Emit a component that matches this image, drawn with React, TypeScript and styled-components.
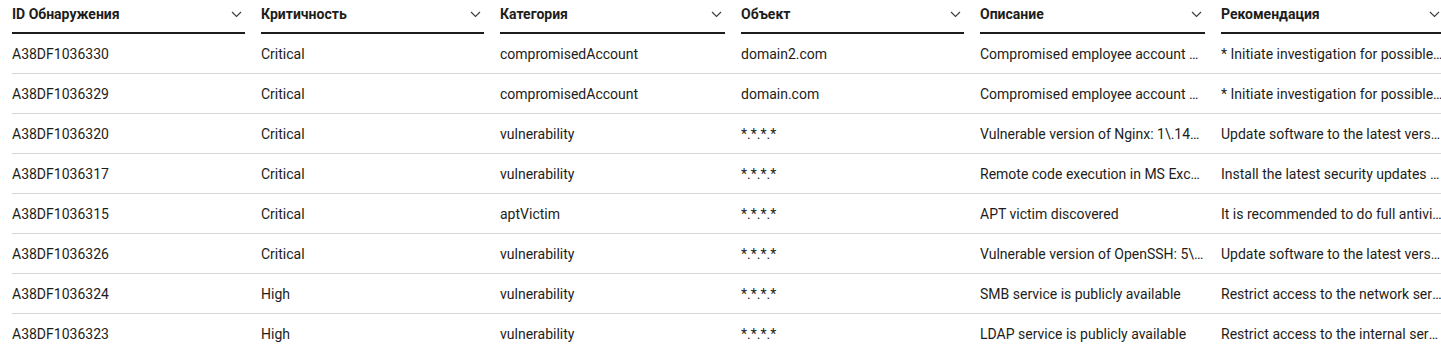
import styled, { createGlobalStyle } from "styled-components";

type Finding = {
  id: string;
  severity: string;
  category: string;
  target: string;
  description: string;
  recommendation: string;
};

const columns = [
  { title: "ID Обнаружения", width: 233 },
  { title: "Критичность", width: 223 },
  { title: "Категория", width: 225 },
  { title: "Объект", width: 223 },
  { title: "Описание", width: 225 },
  { title: "Рекомендация", width: 222 },
];

const findings: Finding[] = [
  {
    id: "A38DF1036330",
    severity: "Critical",
    category: "compromisedAccount",
    target: "domain2.com",
    description: "Compromised employee account credentials found",
    recommendation: "* Initiate investigation for possible account compromise",
  },
  {
    id: "A38DF1036329",
    severity: "Critical",
    category: "compromisedAccount",
    target: "domain.com",
    description: "Compromised employee account credentials found",
    recommendation: "* Initiate investigation for possible account compromise",
  },
  {
    id: "A38DF1036320",
    severity: "Critical",
    category: "vulnerability",
    target: "*.*.*.*",
    description: "Vulnerable version of Nginx: 1\\.14\\.2",
    recommendation: "Update software to the latest version",
  },
  {
    id: "A38DF1036317",
    severity: "Critical",
    category: "vulnerability",
    target: "*.*.*.*",
    description: "Remote code execution in MS Exchange",
    recommendation: "Install the latest security updates (KB5000871)",
  },
  {
    id: "A38DF1036315",
    severity: "Critical",
    category: "aptVictim",
    target: "*.*.*.*",
    description: "APT victim discovered",
    recommendation: "It is recommended to do full antivirus scan",
  },
  {
    id: "A38DF1036326",
    severity: "Critical",
    category: "vulnerability",
    target: "*.*.*.*",
    description: "Vulnerable version of OpenSSH: 5\\.3",
    recommendation: "Update software to the latest version",
  },
  {
    id: "A38DF1036324",
    severity: "High",
    category: "vulnerability",
    target: "*.*.*.*",
    description: "SMB service is publicly available",
    recommendation: "Restrict access to the network service",
  },
  {
    id: "A38DF1036323",
    severity: "High",
    category: "vulnerability",
    target: "*.*.*.*",
    description: "LDAP service is publicly available",
    recommendation: "Restrict access to the internal service",
  },
];

const Chevron = () => (
  <svg width="11" height="7" viewBox="0 0 11 7" fill="none">
    <path d="M1 1l4.5 4.5L10 1" stroke="#3a3a3f" strokeWidth="1.1" />
  </svg>
);

export default function App() {
  return (
    <>
      <GlobalStyle />
      <Page>
        <Table>
          <colgroup>
            {columns.map((c) => (
              <col key={c.title} style={{ width: c.width + 16 }} />
            ))}
          </colgroup>
          <thead>
            <tr>
              {columns.map((c) => (
                <HeadCell key={c.title}>
                  <HeadLabel>
                    <span>{c.title}</span>
                    <Chevron />
                  </HeadLabel>
                </HeadCell>
              ))}
            </tr>
          </thead>
          <tbody>
            {findings.map((f) => (
              <tr key={f.id}>
                <Cell>{f.id}</Cell>
                <Cell>{f.severity}</Cell>
                <Cell>{f.category}</Cell>
                <Cell>{f.target}</Cell>
                <Cell>{f.description}</Cell>
                <Cell>{f.recommendation}</Cell>
              </tr>
            ))}
          </tbody>
        </Table>
      </Page>
    </>
  );
}

const GlobalStyle = createGlobalStyle`
  body {
    margin: 0;
    background: #fff;
    font-family: Roboto, "Noto Sans", sans-serif;
    color: #1d1d1b;
    overflow: hidden;
  }
`;

const Page = styled.div`
  padding-left: 12px;
  width: 1460px;
`;

const Table = styled.table`
  table-layout: fixed;
  border-collapse: collapse;
  width: ${columns.reduce((s, c) => s + c.width + 16, 0)}px;
`;

const HeadCell = styled.th`
  padding: 0 16px 0 0;
  text-align: left;
`;

const HeadLabel = styled.div`
  display: flex;
  align-items: center;
  justify-content: space-between;
  height: 34px;
  padding: 0 3px 4px 0;
  border-bottom: 2px solid #1d1d1b;
  box-sizing: border-box;
  font-size: 14px;
  font-weight: 700;
`;

const Cell = styled.td`
  height: 39px;
  padding: 0 16px 0 0;
  border-bottom: 1px solid #d6d6dc;
  font-size: 14px;
  font-weight: 400;
  white-space: nowrap;
  overflow: hidden;
  text-overflow: ellipsis;
`;
